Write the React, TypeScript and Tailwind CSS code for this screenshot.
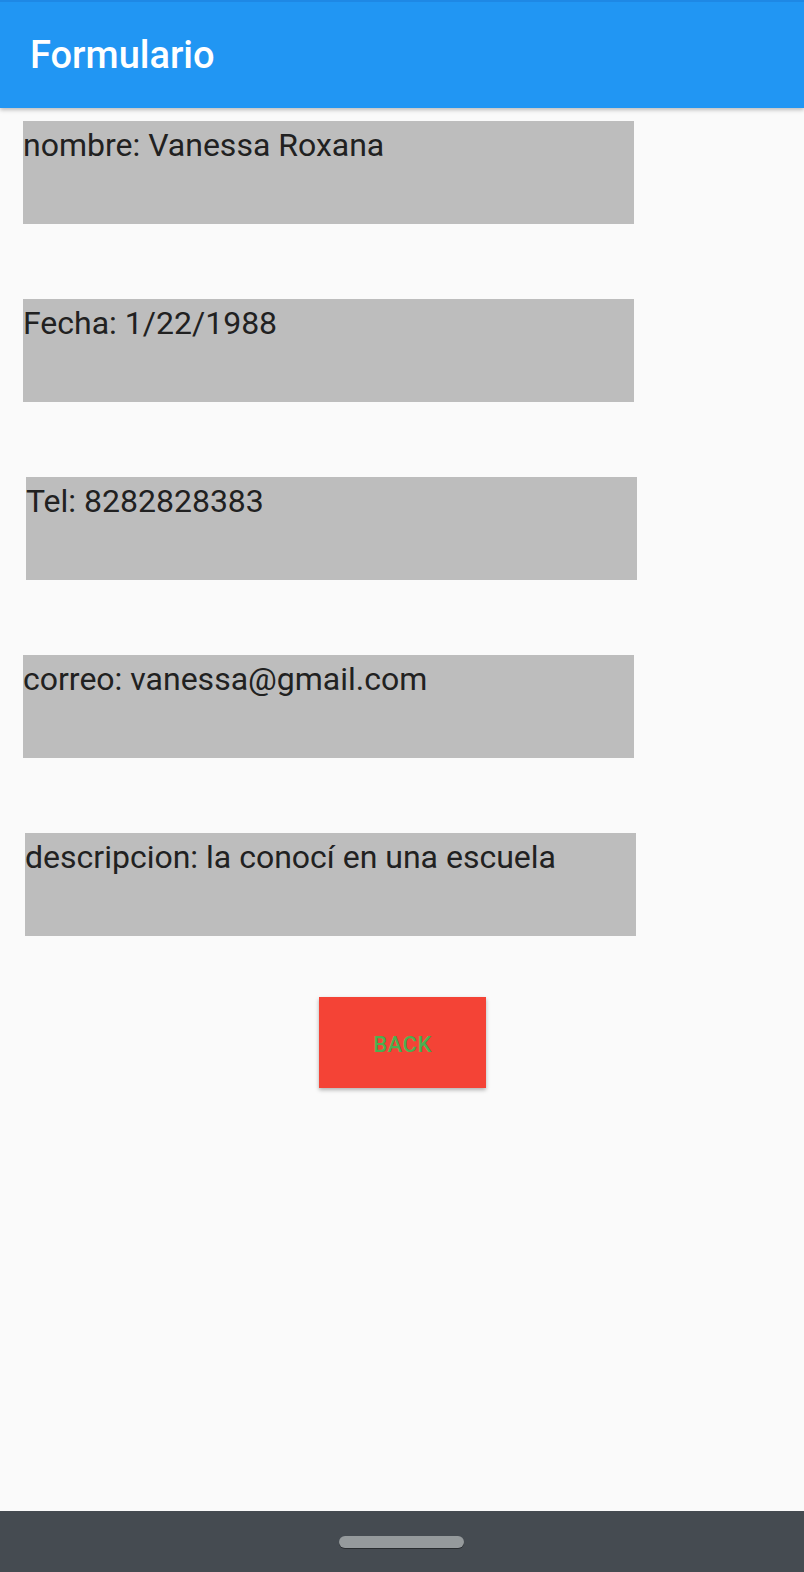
const fields = [
  { label: "nombre: Vanessa Roxana", ml: "ml-[23px]", mt: "mt-[13px]" },
  { label: "Fecha: 1/22/1988", ml: "ml-[23px]", mt: "mt-[75px]" },
  { label: "Tel: 8282828383", ml: "ml-[26px]", mt: "mt-[75px]" },
  { label: "correo: vanessa@gmail.com", ml: "ml-[23px]", mt: "mt-[75px]" },
  { label: "descripcion: la conocí en una escuela", ml: "ml-[25px]", mt: "mt-[75px]" },
];

export default function App() {
  return (
    <div className="flex flex-col bg-[#fafafa] w-[804px] h-[1572px] font-['Roboto',sans-serif] overflow-hidden">
      <header className="z-10 flex items-center bg-[#2196f3] shadow-[0_2px_4px_rgba(0,0,0,0.25)] pl-[30px] border-[#1e88e5] border-t-2 h-[108px] shrink-0">
        <h1 className="font-medium text-[38px] text-white">Formulario</h1>
      </header>

      <main className="flex flex-col flex-1">
        {fields.map((f) => (
          <div
            key={f.label}
            className={`${f.ml} ${f.mt} bg-[#bdbdbd] w-[611px] h-[103px] text-[#212121] text-[32px] leading-normal`}
          >
            {f.label}
          </div>
        ))}

        <div className="flex justify-center mt-[61px] pl-[1px]">
          <button className="bg-[#f44336] shadow-[0_2px_4px_rgba(0,0,0,0.3)] pt-[4px] w-[167px] h-[91px] font-medium text-[#4caf50] text-[22px] tracking-[0.5px]">
            BACK
          </button>
        </div>
      </main>

      <footer className="flex justify-center items-center bg-[#454b51] h-[61px] shrink-0">
        <div className="bg-[#959a9c] shadow-[0_1px_0_rgba(0,0,0,0.4)] -ml-[1px] rounded-full w-[125px] h-[12px]"></div>
      </footer>
    </div>
  );
}
